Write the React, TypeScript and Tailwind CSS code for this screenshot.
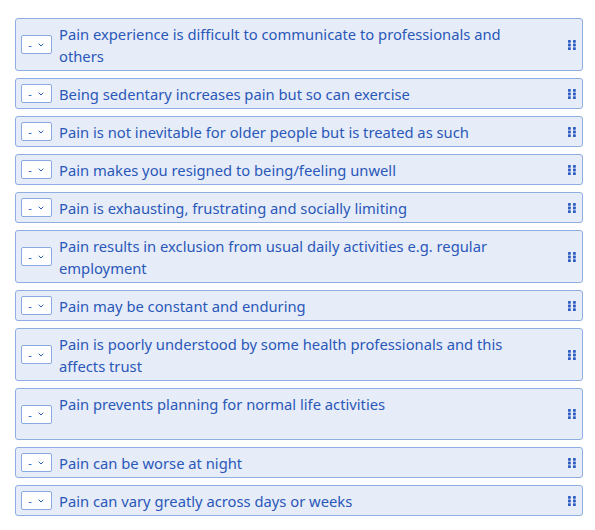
import { ChevronDown } from 'lucide-react'

const items = [
  { text: 'Pain experience is difficult to communicate to professionals and others' },
  { text: 'Being sedentary increases pain but so can exercise' },
  { text: 'Pain is not inevitable for older people but is treated as such' },
  { text: 'Pain makes you resigned to being/feeling unwell' },
  { text: 'Pain is exhausting, frustrating and socially limiting' },
  { text: 'Pain results in exclusion from usual daily activities e.g. regular employment' },
  { text: 'Pain may be constant and enduring' },
  { text: 'Pain is poorly understood by some health professionals and this affects trust' },
  { text: 'Pain prevents planning for normal life activities', tall: true },
  { text: 'Pain can be worse at night' },
  { text: 'Pain can vary greatly across days or weeks' },
]

function Grip() {
  return (
    <svg width="8" height="10" viewBox="0 0 8 10" className="text-[#2c5cc0]">
      {[0, 3.6, 7.2].map((y) =>
        [0, 5].map((x) => <rect key={x + '-' + y} x={x} y={y} width="2.8" height="2.8" rx="0.6" fill="currentColor" />)
      )}
    </svg>
  )
}

export default function App() {
  return (
    <div className="min-h-screen bg-white pt-[18px] pl-[15px] pr-[12px] font-['Noto_Sans',sans-serif]">
      <div className="flex flex-col gap-[7px]">
        {items.map((item) => (
          <div
            key={item.text}
            className={'flex items-center border border-[#8eaee4] rounded-[3px] bg-[#e6ecf8] pl-[5px] pr-[5px] ' + (item.tall ? 'min-h-[52px]' : '')}
          >
            <div className="flex items-center justify-center gap-[5px] w-[31px] h-[19px] shrink-0 bg-white border border-[#8aa9e0] rounded-[2px] text-[#2c5cc0]">
              <span className="text-[11px] leading-none">-</span>
              <ChevronDown size={8} strokeWidth={3} />
            </div>
            <div className={'flex-1 pl-[7px] pr-[32px] pt-[4px] pb-[3px] text-[14.75px] leading-[22px] text-[#2a58b8] ' + (item.tall ? 'self-start' : '')}>
              {item.text}
            </div>
            <div className="shrink-0 pr-[1px]">
              <Grip />
            </div>
          </div>
        ))}
      </div>
    </div>
  )
}
